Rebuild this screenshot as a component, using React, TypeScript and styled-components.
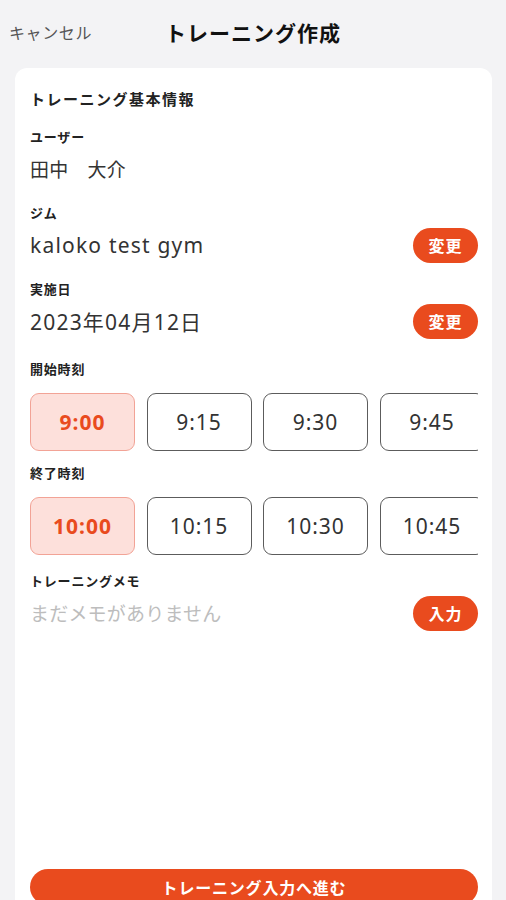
import React from 'react';
import styled, { createGlobalStyle, css } from 'styled-components';

const ORANGE = '#e94b1e';

const GlobalStyle = createGlobalStyle`
  html, body {
    margin: 0;
    padding: 0;
    background: #f3f3f5;
    overflow: hidden;
  }
  body {
    font-family: 'Noto Sans', 'Noto Sans CJK JP', sans-serif;
    color: #222;
  }
  * {
    box-sizing: border-box;
  }
`;

const Screen = styled.div`
  display: flex;
  flex-direction: column;
  height: 920px;
  background: #f3f3f5;
`;

const Header = styled.header`
  display: grid;
  grid-template-columns: 1fr auto 1fr;
  align-items: center;
  height: 68px;
  padding: 0 9px 4px;
`;

const CancelButton = styled.button`
  justify-self: start;
  border: none;
  background: none;
  padding: 0;
  font: inherit;
  font-size: 16px;
  letter-spacing: 0.6px;
  color: #555;
  cursor: pointer;
`;

const Title = styled.h1`
  margin: 0;
  font-size: 21px;
  font-weight: 700;
  letter-spacing: 1px;
  color: #111;
`;

const Card = styled.main`
  flex: 1;
  display: flex;
  flex-direction: column;
  margin: 0 14px 0 15px;
  padding: 21px 14px 15px 15px;
  background: #fff;
  border-radius: 12px 12px 0 0;
`;

const SectionTitle = styled.h2`
  margin: 0 0 20px;
  font-size: 15px;
  line-height: 20px;
  font-weight: 700;
  letter-spacing: 1.5px;
  color: #222;
`;

const Field = styled.section<{ $gap?: number; $top?: number; $bottom?: number }>`
  display: flex;
  flex-direction: column;
  gap: ${({ $gap }) => $gap ?? 6}px;
  margin-top: ${({ $top }) => $top ?? 0}px;
  margin-bottom: ${({ $bottom }) => $bottom ?? 18}px;
`;

const Label = styled.div`
  font-size: 13px;
  line-height: 16px;
  font-weight: 700;
  letter-spacing: 0.8px;
  color: #222;
`;

const ValueRow = styled.div`
  display: flex;
  align-items: center;
  justify-content: space-between;
  min-height: 36px;
`;

const Value = styled.span<{ $placeholder?: boolean; $latin?: boolean }>`
  font-size: ${({ $latin }) => ($latin ? 21 : 19)}px;
  letter-spacing: ${({ $latin }) => ($latin ? 1.2 : 0.2)}px;
  color: ${({ $placeholder }) => ($placeholder ? '#bdbdbd' : '#333')};
`;

const PillButton = styled.button`
  width: 65px;
  height: 35px;
  border: none;
  border-radius: 18px;
  background: ${ORANGE};
  color: #fff;
  font: inherit;
  font-size: 16px;
  font-weight: 700;
  letter-spacing: 1px;
  cursor: pointer;
`;

const TimeRow = styled.div`
  display: flex;
  gap: 11.5px;
  overflow: hidden;
`;

const TimeButton = styled.button<{ $selected?: boolean }>`
  flex: 0 0 105px;
  height: 58px;
  border-radius: 9px;
  border: 1px solid #5c5c5c;
  background: #fff;
  color: #333;
  font: inherit;
  font-size: 21px;
  letter-spacing: 1px;
  cursor: pointer;

  ${({ $selected }) =>
    $selected &&
    css`
      border-color: #f2a396;
      background: #fde0db;
      color: ${ORANGE};
      font-weight: 700;
    `}
`;

const SubmitButton = styled.button`
  margin-top: auto;
  width: 100%;
  height: 36px;
  border: none;
  border-radius: 18px;
  background: ${ORANGE};
  color: #fff;
  font: inherit;
  font-size: 16px;
  font-weight: 700;
  letter-spacing: 0.8px;
  cursor: pointer;
`;

const startTimes = ['9:00', '9:15', '9:30', '9:45'];
const endTimes = ['10:00', '10:15', '10:30', '10:45'];

const TimePicker: React.FC<{ times: string[]; selected: string }> = ({ times, selected }) => (
  <TimeRow>
    {times.map((t) => (
      <TimeButton key={t} $selected={t === selected}>
        {t}
      </TimeButton>
    ))}
  </TimeRow>
);

export default function App() {
  return (
    <>
      <GlobalStyle />
      <Screen>
        <Header>
          <CancelButton>キャンセル</CancelButton>
          <Title>トレーニング作成</Title>
          <span />
        </Header>
        <Card>
          <SectionTitle>トレーニング基本情報</SectionTitle>

          <Field>
            <Label>ユーザー</Label>
            <ValueRow>
              <Value>田中　大介</Value>
            </ValueRow>
          </Field>

          <Field>
            <Label>ジム</Label>
            <ValueRow>
              <Value $latin>kaloko test gym</Value>
              <PillButton>変更</PillButton>
            </ValueRow>
          </Field>

          <Field>
            <Label>実施日</Label>
            <ValueRow>
              <Value $latin>2023年04月12日</Value>
              <PillButton>変更</PillButton>
            </ValueRow>
          </Field>

          <Field $gap={16} $top={4} $bottom={14}>
            <Label>開始時刻</Label>
            <TimePicker times={startTimes} selected="9:00" />
          </Field>

          <Field $gap={16}>
            <Label>終了時刻</Label>
            <TimePicker times={endTimes} selected="10:00" />
          </Field>

          <Field>
            <Label>トレーニングメモ</Label>
            <ValueRow>
              <Value $placeholder>まだメモがありません</Value>
              <PillButton>入力</PillButton>
            </ValueRow>
          </Field>

          <SubmitButton>トレーニング入力へ進む</SubmitButton>
        </Card>
      </Screen>
    </>
  );
}
